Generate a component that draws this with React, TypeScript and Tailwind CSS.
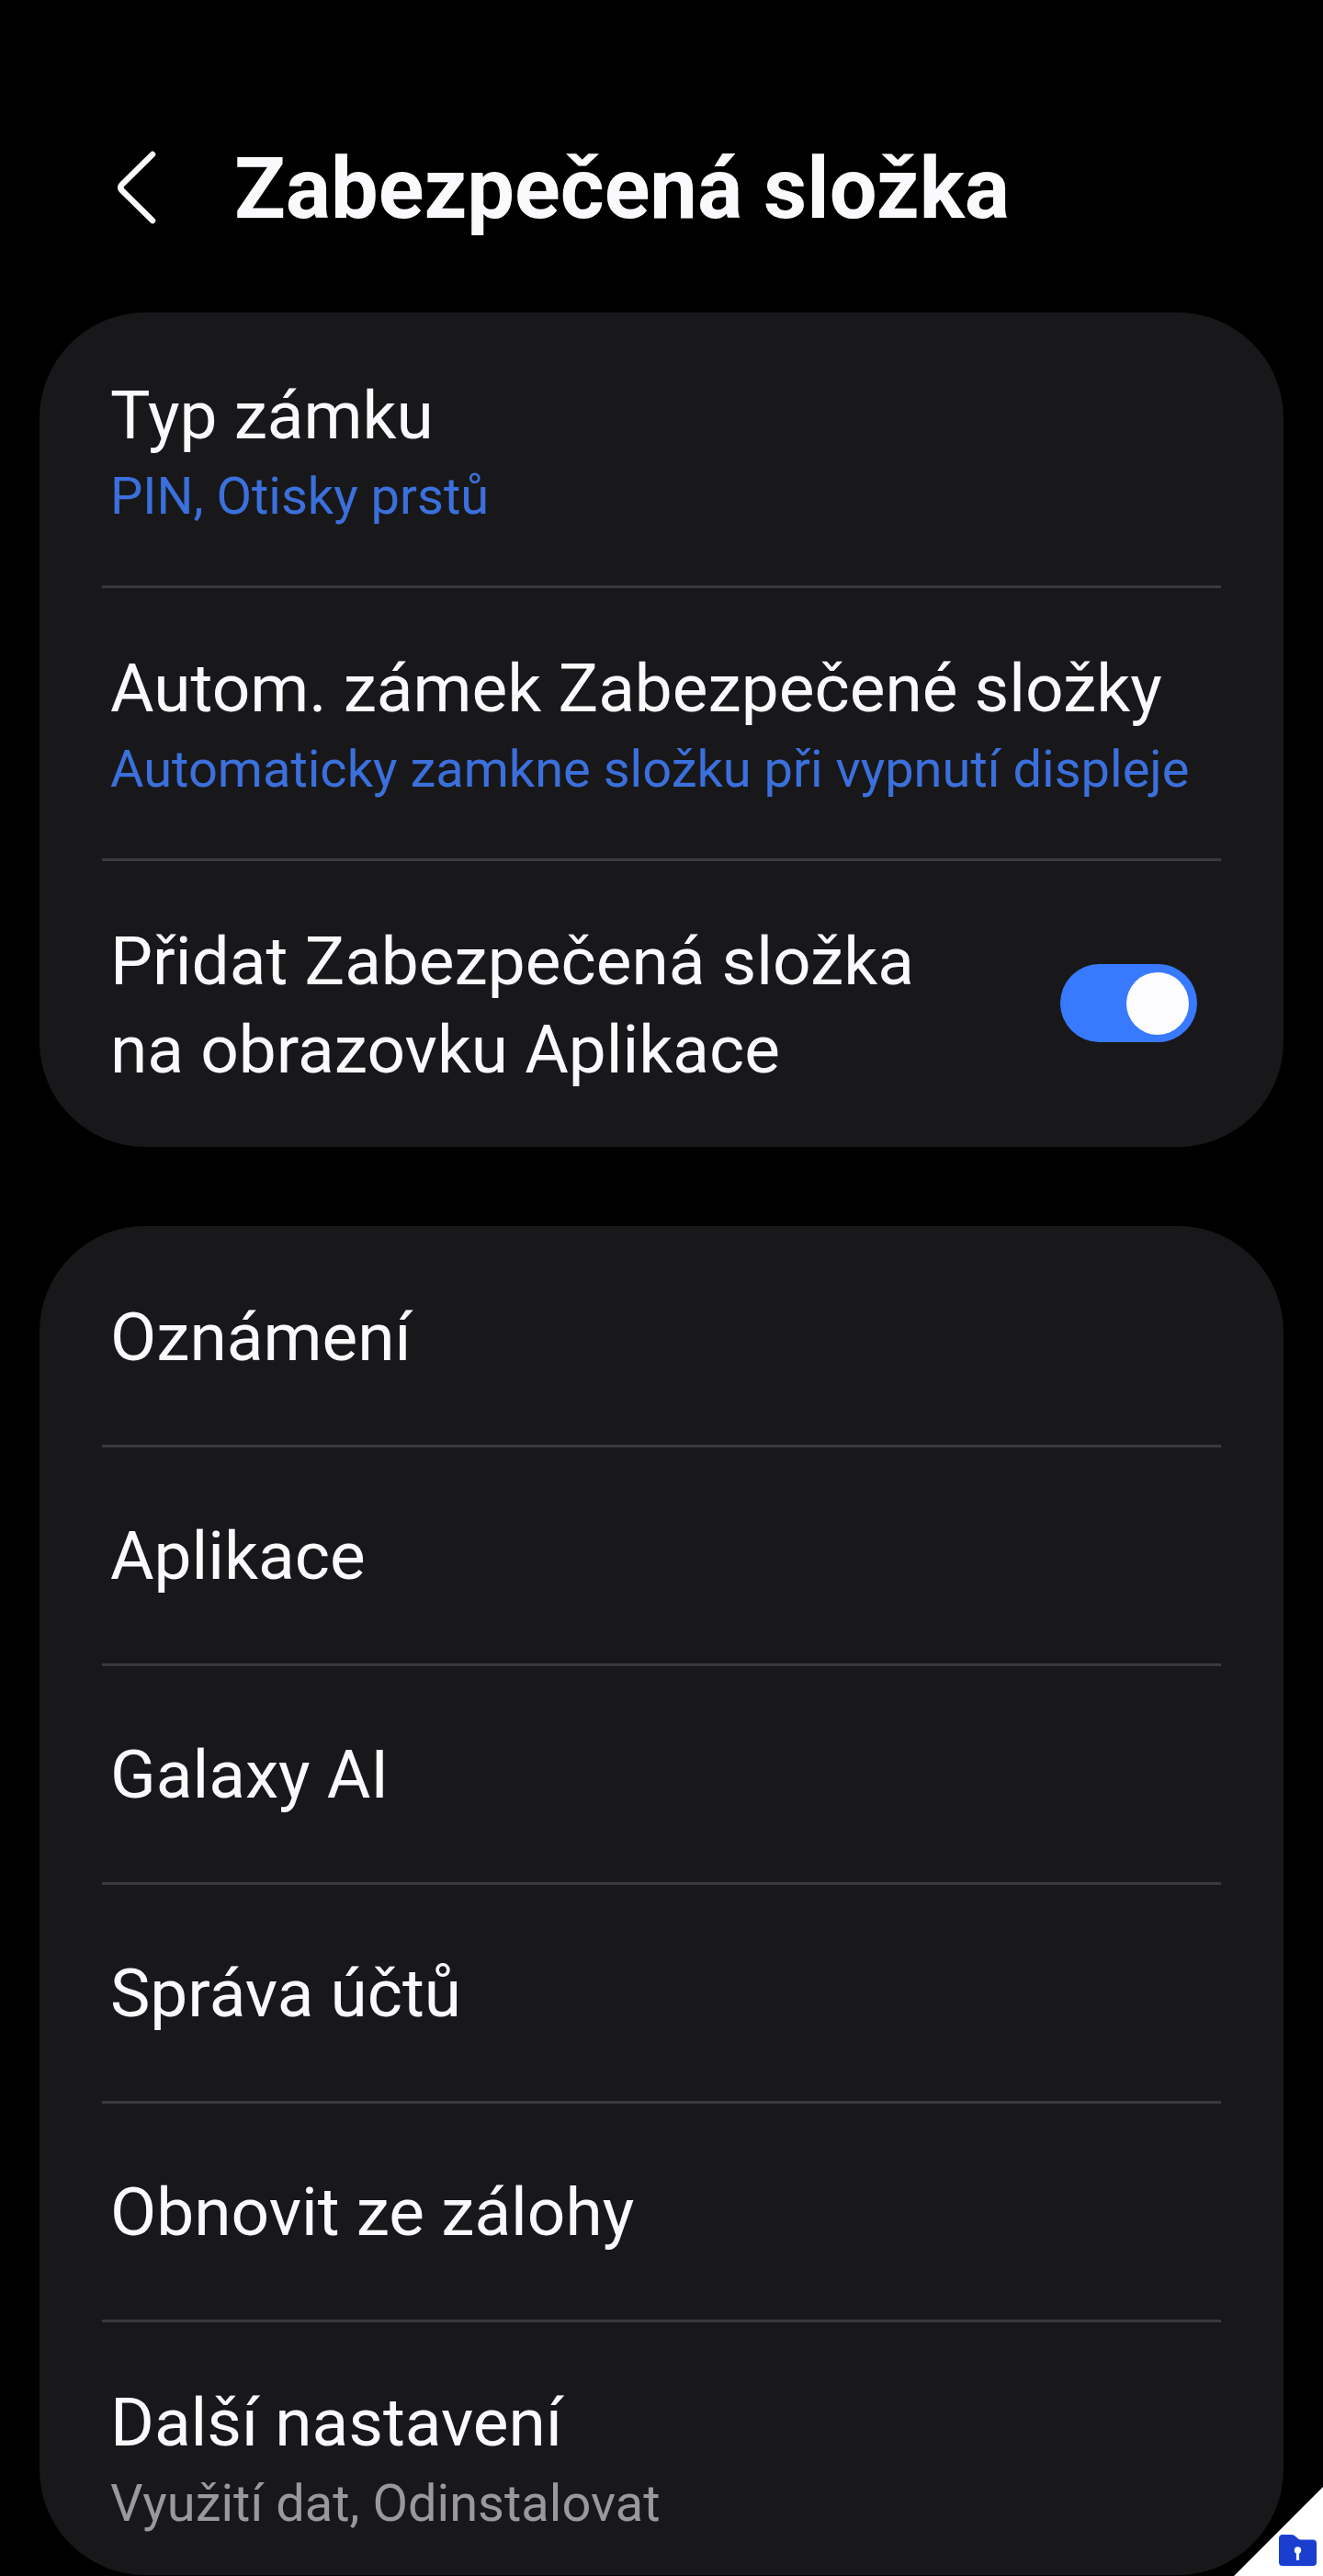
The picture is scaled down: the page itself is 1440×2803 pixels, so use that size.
import React, { useState } from "react";

const Divider: React.FC = () => <div className="mx-[68px] h-[3px] bg-[#3a3a3c]" />;

type RowProps = {
  title: string;
  subtitle?: string;
  muted?: boolean;
  last?: boolean;
};

const Row: React.FC<RowProps> = ({ title, subtitle, muted, last }) => {
  if (!subtitle) {
    return (
      <button className="block w-full px-[77px] pt-[70px] pb-[69px] text-left text-[73px] leading-[96px]">
        {title}
      </button>
    );
  }
  return (
    <button
      className={`block w-full px-[77px] pt-[61px] text-left ${last ? "pb-[38px]" : "pb-[57px]"}`}
    >
      <span className="block text-[73px] leading-[96px]">{title}</span>
      <span
        className={`block text-[56px] leading-[80px] ${muted ? "text-[#99999c]" : "text-[#3b70dc]"}`}
      >
        {subtitle}
      </span>
    </button>
  );
};

const items = ["Oznámení", "Aplikace", "Galaxy AI", "Správa účtů", "Obnovit ze zálohy"];

const App: React.FC = () => {
  const [enabled, setEnabled] = useState(true);

  return (
    <div className="relative min-h-screen overflow-hidden bg-black px-[43px] font-['Roboto',sans-serif] text-[#fafafd]">
      <header className="flex items-center pt-[144px] pb-[72px] pl-[85px]">
        <button aria-label="Zpět" className="mr-[84px] pb-1">
          <svg width="43" height="80" viewBox="0 0 43 80" fill="none">
            <path
              d="M38 4L5 36.500Q1.500 40 5 43.500L38 76"
              stroke="currentColor"
              strokeWidth="6.500"
              strokeLinecap="round"
              strokeLinejoin="round"
            />
          </svg>
        </button>
        <h1 className="text-[92px] leading-[124px] font-bold">Zabezpečená složka</h1>
      </header>

      <main>
        <section className="rounded-[115px] bg-[#18181a] pt-[3px]">
          <Row title="Typ zámku" subtitle="PIN, Otisky prstů" />
          <Divider />
          <Row
            title="Autom. zámek Zabezpečené složky"
            subtitle="Automaticky zamkne složku při vypnutí displeje"
          />
          <Divider />
          <div className="flex items-start justify-between pt-[61px] pr-[94px] pb-[58px] pl-[77px]">
            <label htmlFor="show-in-apps" className="text-[73px] leading-[96px]">
              Přidat Zabezpečená složka
              <br />
              na obrazovku Aplikace
            </label>
            <input
              id="show-in-apps"
              type="checkbox"
              role="switch"
              checked={enabled}
              onChange={(e) => setEnabled(e.target.checked)}
              className="mt-[51px] flex h-[85px] w-[149px] shrink-0 appearance-none items-center rounded-full bg-[#5c5c60] px-[9px] before:size-[68px] before:rounded-full before:bg-[#fcfcff] checked:justify-end checked:bg-[#387aff]"
            />
          </div>
        </section>

        <section className="mt-[86px] rounded-[115px] bg-[#18181a] pt-[3px]">
          {items.map((item) => (
            <React.Fragment key={item}>
              <Row title={item} />
              <Divider />
            </React.Fragment>
          ))}
          <Row title="Další nastavení" subtitle="Využití dat, Odinstalovat" muted last />
        </section>
      </main>

      {/* folded corner with the secure folder logo */}
      <svg className="absolute right-0 bottom-0" width="97" height="97" viewBox="0 0 97 97">
        <path d="M97 0V97H0Z" fill="#fff" />
        <path
          d="M53 52H63Q65 52 66.500 53.500L70 56.500Q71 57.500 73 57.500H86Q90 57.500 90 61.500V82Q90 86 86 86H53Q49 86 49 82V56Q49 52 53 52Z"
          fill="#1a3fcf"
        />
        <circle cx="69.500" cy="69" r="3.700" fill="#fff" />
        <path d="M69.500 70V78.500" stroke="#fff" strokeWidth="3.200" strokeLinecap="round" />
      </svg>
    </div>
  );
};

export default App;
